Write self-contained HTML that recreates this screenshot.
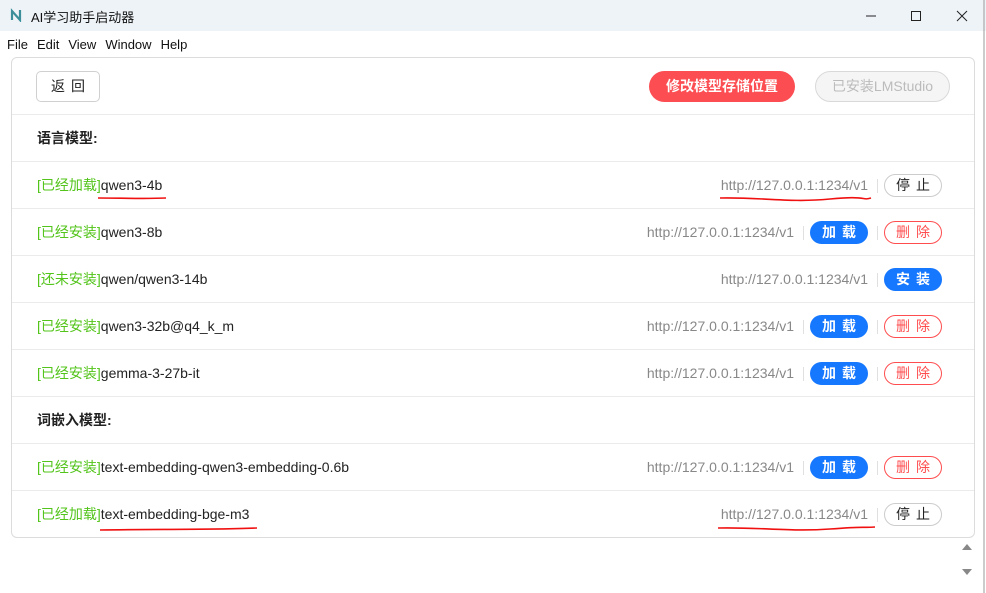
<!DOCTYPE html>
<html><head><meta charset="utf-8"><style>
*{margin:0;padding:0;box-sizing:border-box}
body{width:986px;height:593px;overflow:hidden;background:#fff;font-family:"Liberation Sans","Noto Sans CJK SC",sans-serif;position:relative;color:#222}
.title{position:absolute;left:0;top:0;width:986px;height:31px;background:#eef3f8;font-size:13px}
.title .t{position:absolute;left:31px;top:7px;color:#111}
.menu{position:absolute;top:37px;left:7px;font-size:13px;color:#111;word-spacing:1px}
.menu span{margin-right:9px}
.card{position:absolute;left:11px;top:57px;width:964px;height:481px;border:1px solid #dcdcdc;border-radius:6px;overflow:hidden}
.row{position:absolute;left:0;width:962px;height:47px;border-top:1px solid #ebebeb;font-size:14px}
.row .n{position:absolute;left:25px;top:0;line-height:46px}
.g{color:#52c41a}
.h{font-weight:bold;font-size:14px}
.url{position:absolute;top:0;line-height:47px;color:#888;font-size:14px;text-align:right}
.sep{position:absolute;top:17px;width:1px;height:14px;background:#e0e0e0}
.b{position:absolute;top:12px;height:23px;width:58px;border-radius:12px;font-size:14px;text-align:center;line-height:21px;letter-spacing:6px;text-indent:6px}
.stop{border:1px solid #ccc;background:#fff;color:#222}
.load{background:#1677ff;color:#fff;border:1px solid #1677ff;font-weight:bold}
.del{border:1px solid #ff4d4f;color:#ff4d4f;background:#fff}
.btn{position:absolute;top:13px;height:31px;border-radius:16px;font-size:14px;text-align:center;line-height:31px}
</style></head><body>
<div class="title">
<svg style="position:absolute;left:10px;top:8px" width="14" height="14" viewBox="0 0 14 14"><path d="M2 12V3l8 9V2" stroke="#3a8f9a" stroke-width="2.2" fill="none"/></svg>
<div class="t">AI学习助手启动器</div>
<svg style="position:absolute;left:866px;top:9px" width="110" height="14"><path d="M0 7h10" stroke="#222"/><path d="M45.5 2.5h9v9h-9z" stroke="#222" fill="none"/><path d="M91 2l10 10M101 2l-10 10" stroke="#222"/></svg>
</div>
<div class="menu"><span>File</span><span>Edit</span><span>View</span><span>Window</span><span>Help</span></div>
<div class="card">
<div class="btn" style="left:24px;width:64px;border:1px solid #d0d0d0;border-radius:5px;line-height:29px;letter-spacing:6px;text-indent:6px">返回</div>
<div class="btn" style="left:637px;width:146px;background:#fb4d52;color:#fff;font-weight:bold">修改模型存储位置</div>
<div class="btn" style="left:803px;width:135px;background:#f5f5f5;border:1px solid #d9d9d9;color:#bbb;line-height:29px">已安装LMStudio</div>

<div class="row" style="top:56px"><span class="n h">语言模型:</span></div>
<div class="row" style="top:103px"><span class="n"><span class="g">[已经加载]</span>qwen3-4b</span><span class="url" style="right:106px">http://127.0.0.1:1234/v1</span><div class="sep" style="left:865px"></div><div class="b stop" style="left:872px">停止</div></div>
<div class="row" style="top:150px"><span class="n"><span class="g">[已经安装]</span>qwen3-8b</span><span class="url" style="right:180px">http://127.0.0.1:1234/v1</span><div class="sep" style="left:791px"></div><div class="b load" style="left:798px">加载</div><div class="sep" style="left:865px"></div><div class="b del" style="left:872px">删除</div></div>
<div class="row" style="top:197px"><span class="n"><span class="g">[还未安装]</span>qwen/qwen3-14b</span><span class="url" style="right:106px">http://127.0.0.1:1234/v1</span><div class="sep" style="left:865px"></div><div class="b load" style="left:872px">安装</div></div>
<div class="row" style="top:244px"><span class="n"><span class="g">[已经安装]</span>qwen3-32b@q4_k_m</span><span class="url" style="right:180px">http://127.0.0.1:1234/v1</span><div class="sep" style="left:791px"></div><div class="b load" style="left:798px">加载</div><div class="sep" style="left:865px"></div><div class="b del" style="left:872px">删除</div></div>
<div class="row" style="top:291px"><span class="n"><span class="g">[已经安装]</span>gemma-3-27b-it</span><span class="url" style="right:180px">http://127.0.0.1:1234/v1</span><div class="sep" style="left:791px"></div><div class="b load" style="left:798px">加载</div><div class="sep" style="left:865px"></div><div class="b del" style="left:872px">删除</div></div>
<div class="row" style="top:338px"><span class="n h">词嵌入模型:</span></div>
<div class="row" style="top:385px"><span class="n"><span class="g">[已经安装]</span>text-embedding-qwen3-embedding-0.6b</span><span class="url" style="right:180px">http://127.0.0.1:1234/v1</span><div class="sep" style="left:791px"></div><div class="b load" style="left:798px">加载</div><div class="sep" style="left:865px"></div><div class="b del" style="left:872px">删除</div></div>
<div class="row" style="top:432px"><span class="n"><span class="g">[已经加载]</span>text-embedding-bge-m3</span><span class="url" style="right:106px">http://127.0.0.1:1234/v1</span><div class="sep" style="left:865px"></div><div class="b stop" style="left:872px">停止</div></div>
</div>
<svg style="position:absolute;left:0;top:0" width="986" height="593">
<path d="M98 198C120 198 145 199 166 198" stroke="#f01010" stroke-width="1.6" fill="none"/>
<path d="M720 198C760 197 790 203 830 199S860 201 871 198" stroke="#f01010" stroke-width="1.6" fill="none"/>
<path d="M100 530C150 529 210 530 257 528" stroke="#f01010" stroke-width="1.6" fill="none"/>
<path d="M718 528C760 527 790 532 830 529S860 528 875 527" stroke="#f01010" stroke-width="1.6" fill="none"/>
<path d="M962 550l5-6 5 6z" fill="#888"/><path d="M962 569l5 6 5-6z" fill="#888"/>
<path d="M984 0V593" stroke="#999" stroke-width="1"/>
</svg>
</body></html>
